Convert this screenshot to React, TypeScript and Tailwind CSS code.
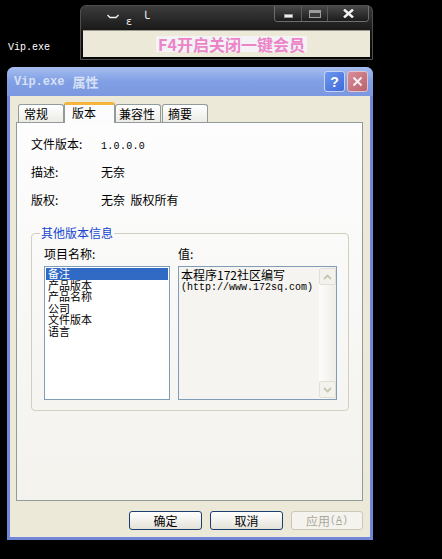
import React from "react"

const mono = "font-['Liberation_Mono','Noto_Sans_CJK_SC',monospace]"

function Chevron({ up }: { up?: boolean }) {
  return (
    <svg width="9" height="6" viewBox="0 0 9 6" fill="none">
      <path
        d={up ? "M1 5 L4.5 1.5 L8 5" : "M1 1 L4.5 4.5 L8 1"}
        stroke="#c9c6b4"
        strokeWidth="1.8"
      />
    </svg>
  )
}

function MiniWindow() {
  return (
    <div className="w-[293px] h-[55px] rounded-t-[6px] border border-[#4e4e4e] bg-gradient-to-b from-[#3c3c3c] via-[#161616] to-[#060606] px-[2px] pb-[2px] flex flex-col">
      <div className="h-[24px] flex items-start justify-between">
        {/* emoticon squiggles */}
        <div className="pl-[24px] pt-[5px] flex items-start text-[#f2f2f2] font-['DejaVu_Sans',sans-serif]">
          <svg width="12" height="6" viewBox="0 0 12 6" className="mt-[3px]">
            <path d="M0.5 1 L3 3.5 L9 3.5 L11.5 1" stroke="#f2f2f2" strokeWidth="1.3" fill="none" />
          </svg>
          <span className="ml-[7px] mt-[5px] text-[11px] leading-[11px]">ε</span>
          <span className="ml-[10px] mt-[1px] text-[13px] leading-[13px]">╰</span>
        </div>
        {/* caption buttons */}
        <div className="mr-[1px] flex h-[16px] rounded-b-[4px] border border-t-0 border-[#6e6e6e] overflow-hidden">
          <div className="w-[26px] flex items-end justify-center pb-[3px] bg-gradient-to-b from-[#4a4a4a] to-[#1c1c1c]">
            <div className="w-[9px] h-[4px] bg-[#f0f0f0] border border-[#9a9a9a]" />
          </div>
          <div className="w-[26px] flex items-center justify-center border-l border-[#5a5a5a] bg-gradient-to-b from-[#4a4a4a] to-[#1c1c1c]">
            <div className="w-[12px] h-[8px] border border-[#9c9c9c] border-t-[3px] bg-[#3a3a3a]" />
          </div>
          <div className="w-[41px] flex items-center justify-center border-l border-[#5a5a5a] bg-gradient-to-b from-[#4a4a4a] to-[#1c1c1c]">
            <svg width="11" height="9" viewBox="0 0 11 9">
              <path d="M1 0.5 L10 8.5 M10 0.5 L1 8.5" stroke="#f4f4f4" strokeWidth="2.4" />
            </svg>
          </div>
        </div>
      </div>
      <div className="flex-1 bg-[#ece9d8] border-t border-[#9d9b90] flex items-center justify-center">
        <span className="ml-[10px] px-[2px] h-[16px] bg-[#f3f3f6] text-[#ec84c8] font-bold text-[16px] leading-[16px] font-['Noto_Sans_CJK_SC',serif]">
          F4开启关闭一键会员
        </span>
      </div>
    </div>
  )
}

function Tabs() {
  return (
    <div className="h-[20px] pl-[2px] flex items-end">
      <div className="w-[46px] h-[18px] border border-b-0 border-[#919b9c] rounded-t-[3px] bg-gradient-to-b from-white to-[#ecebe5] pl-[5px] leading-[17px]">
        常规
      </div>
      <div className="relative z-10 w-[51px] h-[21px] -mb-px border-x border-[#919b9c] border-t-[3px] border-t-[#f5b43c] rounded-t-[3px] bg-[#fcfcfe] pl-[7px] leading-[15px]">
        版本
      </div>
      <div className="w-[46px] h-[18px] border border-b-0 border-[#919b9c] rounded-t-[3px] bg-gradient-to-b from-white to-[#ecebe5] pl-[3px] leading-[17px]">
        兼容性
      </div>
      <div className="w-[46px] h-[18px] ml-px border border-b-0 border-[#919b9c] rounded-t-[3px] bg-gradient-to-b from-white to-[#ecebe5] pl-[5px] leading-[17px]">
        摘要
      </div>
    </div>
  )
}

function InfoRow({ label, children }: { label: string; children: React.ReactNode }) {
  return (
    <div className="h-[28px] flex items-center">
      <div className="w-[70px]">{label}</div>
      <div>{children}</div>
    </div>
  )
}

const items = ["备注", "产品版本", "产品名称", "公司", "文件版本", "语言"]

function VersionPanel() {
  return (
    <div className="h-[379px] border border-[#919b9c] bg-gradient-to-b from-[#fdfdfe] to-[#f3f2ed] pt-[7px] pl-[14px]">
      <InfoRow label="文件版本:">
        <span className={`${mono} text-[10px] tracking-[0.3px]`}>1.0.0.0</span>
      </InfoRow>
      <InfoRow label="描述:">无奈</InfoRow>
      <InfoRow label="版权:">无奈&nbsp; 版权所有</InfoRow>

      <fieldset className="mt-[13px] w-[318px] h-[184px] border border-[#d0d0bf] rounded-[4px] px-[8px]">
        <legend className="px-[1px] text-[#1546cf] leading-[12px]">其他版本信息</legend>
        <div className="ml-[4px]">
          <div className="mt-[9px] flex leading-[12px]">
            <div className="w-[134px]">项目名称:</div>
            <div>值:</div>
          </div>
          <div className="mt-[6px] flex gap-[8px]">
            <div className="w-[126px] h-[134px] border border-[#7f9db9] bg-white p-[1px]">
              {items.map((it, i) => (
                <div
                  key={it}
                  className={
                    i === 0
                      ? "h-[11.5px] leading-[11.5px] text-[11px] pl-[2px] bg-[#316ac5] text-white"
                      : "h-[11.5px] leading-[11.5px] text-[11px] pl-[2px]"
                  }
                >
                  {it}
                </div>
              ))}
            </div>
            <div className="w-[159px] h-[134px] border border-[#7f9db9] bg-[#f5f4f0] flex">
              <div className="flex-1 pl-[2px] pt-[1px] leading-[13px]">
                <div>本程序172社区编写</div>
                <div className={`${mono} text-[10px]`}>(http://www.172sq.com)</div>
              </div>
              <div className="w-[17px] flex flex-col justify-between py-px bg-gradient-to-r from-[#fdfdfc] to-[#eeede7]">
                <div className="h-[17px] rounded-[2px] border border-[#e2e0d6] bg-[#f3f2ed] flex items-center justify-center">
                  <Chevron up />
                </div>
                <div className="h-[17px] rounded-[2px] border border-[#e2e0d6] bg-[#f3f2ed] flex items-center justify-center">
                  <Chevron />
                </div>
              </div>
            </div>
          </div>
        </div>
      </fieldset>
    </div>
  )
}

function PropsDialog() {
  return (
    <div className="w-[366px] h-[473px] rounded-t-[7px] bg-[#7385d6] flex flex-col overflow-hidden">
      {/* title bar */}
      <div className="h-[29px] flex items-center justify-between pl-[7px] pr-[5px] bg-gradient-to-b from-[#a6bdf0] via-[#819fe4] to-[#7c98e0]">
        <span className="font-bold text-[#d6e0f6] text-[13px] leading-[14px] flex items-center">
          <span className={`${mono} font-bold text-[12px] mr-[8px]`}>Vip.exe</span>属性
        </span>
        <div className="flex gap-[2px]">
          <div className="w-[21px] h-[21px] rounded-[3px] border border-[#c5d3f5] bg-gradient-to-br from-[#6f98ee] to-[#3f6ad8] flex items-center justify-center text-white font-bold text-[14px] leading-[14px] font-['Liberation_Sans',sans-serif]">
            ?
          </div>
          <div className="w-[21px] h-[21px] rounded-[3px] border border-[#e3c3cc] bg-gradient-to-br from-[#d68e98] to-[#b9626e] flex items-center justify-center">
            <svg width="11" height="11" viewBox="0 0 11 11">
              <path d="M1.5 1.5 L9.5 9.5 M9.5 1.5 L1.5 9.5" stroke="#f7f0f2" strokeWidth="2" />
            </svg>
          </div>
        </div>
      </div>
      {/* body */}
      <div className="flex-1 px-[3px] pb-[3px] flex">
        <div className="flex-1 bg-[#ece9d8] pl-[6px] pr-[7px] pt-[6px] flex flex-col">
          <Tabs />
          <VersionPanel />
          <div className="mt-[10px] flex justify-end gap-[8px]">
            <div className="w-[73px] h-[19px] rounded-[3px] border border-[#1b3e70] bg-gradient-to-b from-white to-[#e4e2d8] flex items-center justify-center leading-[12px]">
              确定
            </div>
            <div className="w-[73px] h-[19px] rounded-[3px] border border-[#1b3e70] bg-gradient-to-b from-white to-[#e4e2d8] flex items-center justify-center leading-[12px]">
              取消
            </div>
            <div className="w-[72px] h-[19px] rounded-[3px] border border-[#cac8bb] bg-[#f4f3ee] flex items-center justify-center leading-[12px] text-[#aca899]">
              应用<span className={`${mono} text-[10px]`}>(<span className="underline">A</span>)</span>
            </div>
          </div>
        </div>
      </div>
    </div>
  )
}

export default function App() {
  return (
    <div className="w-[442px] h-[559px] bg-black overflow-hidden text-[12px] text-black font-['Noto_Sans_CJK_SC',sans-serif]">
      <div className="flex pt-[5px]">
        <div className="w-[80px] pl-[8px] pt-[37px] text-white text-[10px] leading-[12px] font-['Liberation_Mono',monospace]">
          Vip.exe
        </div>
        <MiniWindow />
      </div>
      <div className="mt-[7px] ml-[7px]">
        <PropsDialog />
      </div>
    </div>
  )
}
